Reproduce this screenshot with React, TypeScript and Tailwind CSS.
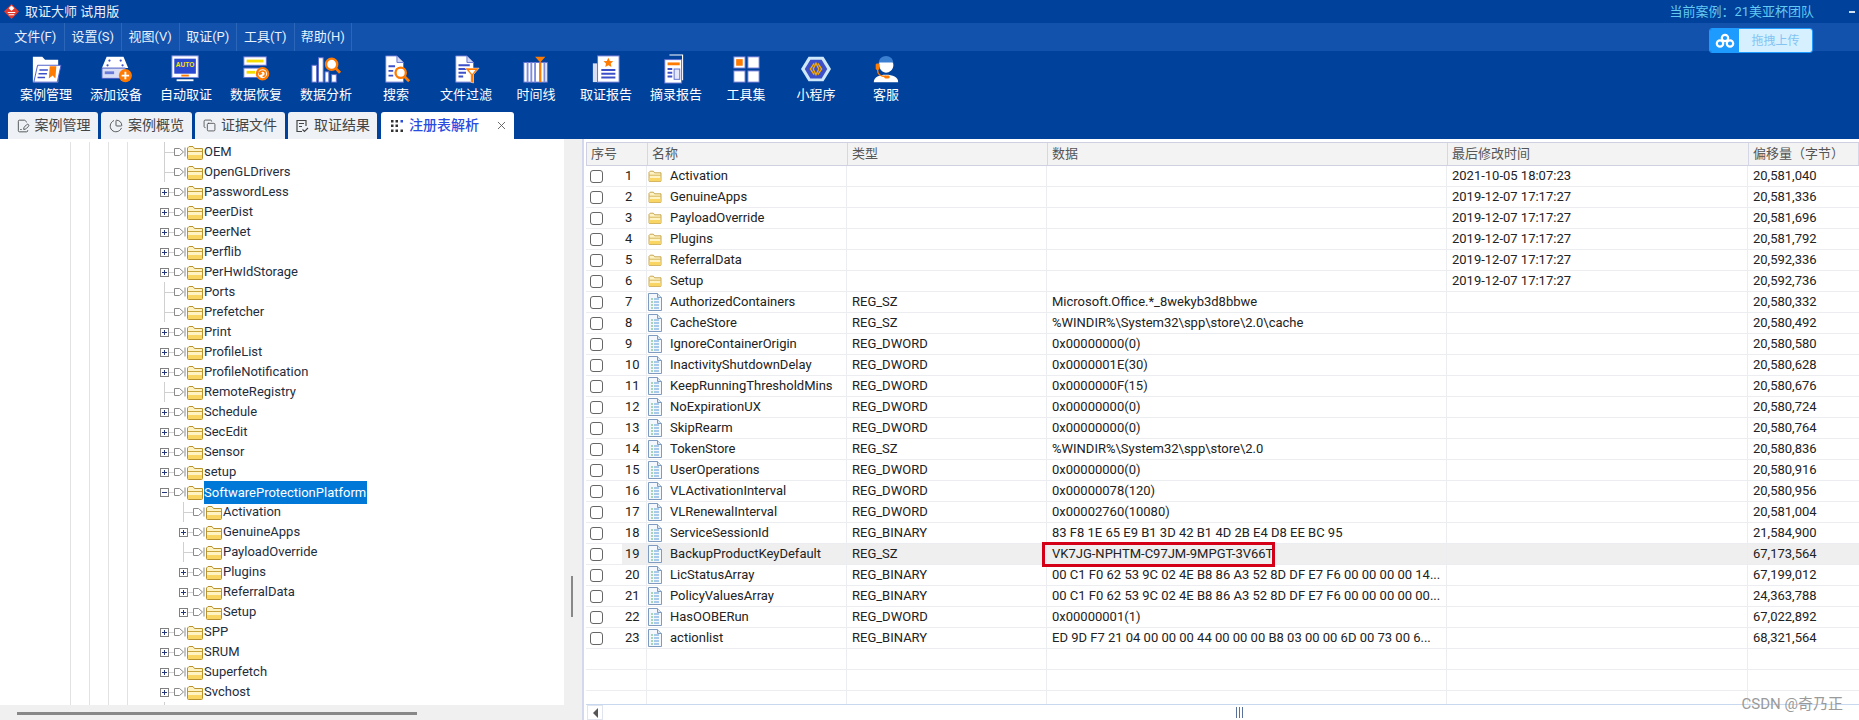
import React from 'react'
import { FilePenLine, ChartPie, Copy, X } from 'lucide-react'

const menus = ['文件(F)', '设置(S)', '视图(V)', '取证(P)', '工具(T)', '帮助(H)']

const Sheet = ({ children }: { children?: React.ReactNode }) => (
  <g>
    <path d="M5 2h12l7 7v21H5z" fill="#fff" stroke="#5f6fd0" />
    <path d="M17 2v7h7" fill="#cfd6f5" stroke="#5f6fd0" />
    {children}
  </g>
)

const toolIcons: Record<string, React.ReactNode> = {
  case: (
    <>
      <path d="M2 3h10l3 3h14v24H2z" fill="#fff" />
      <path d="M7 12h25l-4 18H3z" fill="#fff" stroke="#4a5ac8" strokeWidth="1" />
      <path d="M9 17h9M8 21h9M7 25h8" stroke="#3d50c8" strokeWidth="1.6" />
      <path d="M20 13h7l-1 13-3-3-4 3z" fill="#ff7a00" />
    </>
  ),
  device: (
    <>
      <path d="M6 3h18l5 12H1z" fill="#fff" />
      <path d="M1 15h25v11H1z" fill="#d9def5" stroke="#4a5ac8" />
      <path d="M4 20h10" stroke="#6a7ad8" strokeWidth="3" />
      <circle cx="9" cy="7" r="1.2" fill="#3d50c8" /><circle cx="21" cy="7" r="1.2" fill="#3d50c8" />
      <circle cx="7" cy="12" r="1.2" fill="#3d50c8" /><circle cx="23" cy="12" r="1.2" fill="#3d50c8" />
      <circle cx="26" cy="23" r="7" fill="#ff7a00" />
      <path d="M26 19v8M22 23h8" stroke="#fff" strokeWidth="2" />
    </>
  ),
  auto: (
    <>
      <rect x="1" y="2" width="28" height="23" fill="#fff" stroke="#7f8cdc" />
      <rect x="3.5" y="5" width="23" height="16" fill="#2a49d0" />
      <text x="15" y="14" fontSize="7" fontWeight="700" textAnchor="middle" fill="#ffe100" fontFamily="Liberation Sans, sans-serif">AUTO</text>
      <rect x="11" y="22" width="8" height="2" fill="#ff7a00" />
      <path d="M6 28h18" stroke="#fff" strokeWidth="2" />
    </>
  ),
  recover: (
    <>
      <rect x="3" y="3" width="24" height="9" fill="#fff" stroke="#5f6fd0" />
      <rect x="6" y="6" width="18" height="3" fill="#f5dc00" />
      <rect x="3" y="15" width="20" height="10" fill="#fff" stroke="#5f6fd0" />
      <rect x="6" y="18" width="9" height="3" fill="#f5dc00" />
      <circle cx="23" cy="21" r="6" fill="#fff" stroke="#ff7a00" strokeWidth="2.5" />
      <path d="M20 21a3 3 0 1 1 3 3M19 19l1 2.5 2.5-1" stroke="#ff7a00" strokeWidth="1.6" fill="none" />
    </>
  ),
  analyze: (
    <>
      <rect x="1" y="12" width="5" height="18" fill="#fff" stroke="#5f6fd0" />
      <rect x="8" y="4" width="5" height="26" fill="#fff" stroke="#5f6fd0" />
      <rect x="15" y="19" width="4" height="11" fill="#fff" stroke="#5f6fd0" />
      <rect x="22" y="22" width="5" height="8" fill="#fff" stroke="#5f6fd0" />
      <path d="M26 15l5 5" stroke="#ff7a00" strokeWidth="3" />
      <circle cx="22" cy="11" r="6" fill="#fff" stroke="#ff7a00" strokeWidth="2.5" />
    </>
  ),
  search: (
    <>
      <Sheet>
        <path d="M8 13h7M8 18h5M8 23h5" stroke="#3d50c8" strokeWidth="2" />
      </Sheet>
      <path d="M25 24l5 5" stroke="#ff7a00" strokeWidth="3" />
      <circle cx="21" cy="20" r="5.5" fill="#fff" stroke="#ff7a00" strokeWidth="2.5" />
    </>
  ),
  filter: (
    <>
      <Sheet>
        <path d="M8 12h12M8 16h10M8 20h8M8 24h5" stroke="#3d50c8" strokeWidth="2" />
      </Sheet>
      <path d="M15 15h15l-6 7v9l-3-1v-8z" fill="#ff7a00" stroke="#fff" strokeWidth=".5" />
      <path d="M19 17h7l-3 4h-1z" fill="#fff" />
    </>
  ),
  timeline: (
    <>
      <rect x="3" y="9" width="25" height="21" fill="#fff" stroke="#5f6fd0" />
      <path d="M7 9v21M11 9v21M15 9v21M25 9v21" stroke="#7f8cdc" strokeWidth="2" />
      <path d="M20.5 9v21" stroke="#ff7a00" strokeWidth="2.5" />
      <path d="M15 3h11l-5.5 6z" fill="#ff7a00" />
    </>
  ),
  report: (
    <>
      <rect x="2" y="10" width="6" height="20" fill="#d9def5" />
      <rect x="7" y="2" width="23" height="28" fill="#fff" stroke="#5f6fd0" />
      <path d="M18.5 4l1.6 3.4 3.6.4-2.7 2.4.8 3.6-3.3-1.8-3.3 1.8.8-3.6-2.7-2.4 3.6-.4z" fill="#ff7a00" />
      <path d="M11 17h15M11 21h15M11 25h15" stroke="#3d50c8" strokeWidth="2" />
    </>
  ),
  extract: (
    <>
      <path d="M9 1h14v27" fill="none" stroke="#fff" strokeWidth="1.2" />
      <rect x="4" y="6" width="18" height="25" fill="#fff" stroke="#5f6fd0" />
      <rect x="7" y="9" width="13" height="3" fill="#ff7a00" />
      <path d="M7 16h5M7 20h5M7 24h5" stroke="#3d50c8" strokeWidth="2" />
      <rect x="14" y="16" width="6" height="11" fill="#e4e8fa" stroke="#5f6fd0" />
    </>
  ),
  tools: (
    <>
      <rect x="3" y="3" width="12" height="12" fill="#fff" stroke="#5f6fd0" />
      <rect x="5.5" y="5.5" width="7" height="7" fill="#ff7a00" />
      <rect x="18" y="3" width="12" height="12" fill="#fff" stroke="#5f6fd0" />
      <rect x="3" y="18" width="12" height="12" fill="#fff" stroke="#5f6fd0" />
      <rect x="18" y="18" width="12" height="12" fill="#fff" stroke="#5f6fd0" />
    </>
  ),
  mini: (
    <>
      <path d="M8 3h16l8 13-8 13H8L0 16z" fill="#cfe9fb" />
      <path d="M10 6h12l6 10-6 10H10L4 16z" fill="#3d50c8" />
      <path d="M14 10l-4 6 4 6M18 10l4 6-4 6M16 10l-3 6 3 6 3-6z" fill="none" stroke="#f5a800" strokeWidth="1.5" />
    </>
  ),
  service: (
    <>
      <path d="M3 30c0-6 6-8 13-8s13 2 13 8z" fill="#fff" />
      <path d="M8 10a8 8 0 0 1 16 0l-2 1H9z" fill="#3a7fd0" />
      <path d="M9 9h14c2 2 1 10-7 11-6-1-8-6-7-11z" fill="#fff" />
      <rect x="5" y="10" width="4" height="7" rx="1.5" fill="#ff7a00" />
      <path d="M7 17c0 5 4 7 9 7" stroke="#ff7a00" strokeWidth="1.5" fill="none" />
      <rect x="14" y="23" width="6" height="3" rx="1.5" fill="#ff7a00" />
    </>
  ),
}

const tools = [
  ['案例管理', 'case'], ['添加设备', 'device'], ['自动取证', 'auto'], ['数据恢复', 'recover'],
  ['数据分析', 'analyze'], ['搜索', 'search'], ['文件过滤', 'filter'], ['时间线', 'timeline'],
  ['取证报告', 'report'], ['摘录报告', 'extract'], ['工具集', 'tools'], ['小程序', 'mini'], ['客服', 'service'],
]

const ResultIcon = () => (
  <svg viewBox="0 0 14 14" className="w-[14px] h-[14px]" fill="none" stroke="currentColor" strokeWidth="1.2">
    <path d="M7 12.5H2V1.5h9V7" />
    <path d="M4 4.5h5M4 7.5h3" />
    <path d="M7.5 10.5l2 2 3.5-3.5" />
  </svg>
)

const tabs = [
  { label: '案例管理', w: 'w-[90px] mr-[3px]', icon: <FilePenLine size={14} strokeWidth={1.5} /> },
  { label: '案例概览', w: 'w-[91px] mr-[3px]', icon: <ChartPie size={14} strokeWidth={1.5} /> },
  { label: '证据文件', w: 'w-[90px] mr-[3px]', icon: <Copy size={13} strokeWidth={1.5} /> },
  { label: '取证结果', w: 'w-[89px] mr-[4px]', icon: <ResultIcon /> },
]

const Folder = ({ className = 'w-[16px] h-[15px]' }: { className?: string }) => (
  <svg viewBox="0 0 16 15" className={`shrink-0 ${className}`}>
    <path d="M.5 3V13.5a1 1 0 0 0 1 1h13a1 1 0 0 0 1-1V3.5h-8L6 1.5H2z" fill="#fff3c4" stroke="#b8922f" />
    <path d="M1 6.5h14" stroke="#c9a540" />
    <path d="M1 10h14v4H1z" fill="#f9d663" />
  </svg>
)

const RegFile = () => (
  <svg viewBox="0 0 14 18" className="w-[14px] h-[18px] shrink-0">
    <path d="M.5.5h9l4 4v13H.5z" fill="#f4f8fd" stroke="#7f9cc0" />
    <path d="M9.5.5v4h4" fill="#dbe6f3" stroke="#7f9cc0" />
    <path d="M3 6h2M3 9h2M3 12h2M3 15h2" stroke="#57b36b" />
    <path d="M6 6h5M6 9h5M6 12h5M6 15h5" stroke="#5b9bd8" />
  </svg>
)

const TypeMark = () => (
  <svg viewBox="0 0 12 10" className="w-[12px] h-[10px] shrink-0">
    <path d="M.5 1.5h5l4 3.5-4 3.5h-5z" fill="#fff" stroke="#8a8a8a" />
    <path d="M11 .5v9" stroke="#8a8a8a" />
  </svg>
)

type TreeItem = { name: string; open?: boolean; leaf?: boolean; depth?: number; selected?: boolean }

const treeItems: TreeItem[] = [
  { name: 'OEM', leaf: true }, { name: 'OpenGLDrivers', leaf: true }, { name: 'PasswordLess' }, { name: 'PeerDist' },
  { name: 'PeerNet' }, { name: 'Perflib' }, { name: 'PerHwIdStorage' }, { name: 'Ports', leaf: true },
  { name: 'Prefetcher', leaf: true }, { name: 'Print' }, { name: 'ProfileList' }, { name: 'ProfileNotification' },
  { name: 'RemoteRegistry', leaf: true }, { name: 'Schedule' }, { name: 'SecEdit' }, { name: 'Sensor' }, { name: 'setup' },
  { name: 'SoftwareProtectionPlatform', open: true, selected: true },
  { name: 'Activation', leaf: true, depth: 1 }, { name: 'GenuineApps', depth: 1 }, { name: 'PayloadOverride', leaf: true, depth: 1 },
  { name: 'Plugins', depth: 1 }, { name: 'ReferralData', depth: 1 }, { name: 'Setup', depth: 1 },
  { name: 'SPP' }, { name: 'SRUM' }, { name: 'Superfetch' }, { name: 'Svchost' },
]

const TreeRow = ({ item }: { item: TreeItem }) => (
  <div className="flex h-[20px] pl-[70px] items-stretch shrink-0">
    <div className="w-[19px] border-l border-[#e2e2e2]" />
    <div className="w-[19px] border-l border-[#e2e2e2]" />
    <div className="w-[19px] border-l border-[#e2e2e2]" />
    <div className="w-[19px] border-l border-[#e2e2e2]" />
    <div className="w-[18px]" />
    {item.depth ? <div className="w-[19px]" /> : null}
    <div className={`relative w-[10px] flex items-center ${item.leaf ? 'border-l border-[#d0d0d0]' : ''}`}>
      <div className="w-full border-t border-[#d0d0d0]" />
      {!item.leaf && (
        <div className="absolute left-[-4px] top-[6px] w-[9px] h-[9px] border border-[#808080] bg-white flex items-center justify-center">
          <div className="relative w-[5px] h-px bg-[#26367a]">
            {!item.open && <div className="absolute left-[2px] top-[-2px] w-px h-[5px] bg-[#26367a]" />}
          </div>
        </div>
      )}
    </div>
    <div className="flex items-center">
      <TypeMark />
      <span className="w-[1px]" />
      <Folder />
      <span
        className={`ml-[1px] whitespace-nowrap text-[13px] ${
          item.selected ? 'bg-[#0078d7] text-white w-[163px] h-[23px] leading-[23px]' : 'h-[20px] leading-[20px] text-[#1f2d3d]'
        }`}
      >
        {item.name}
      </span>
    </div>
  </div>
)

const rows: [string, string, string, string, string, boolean][] = [
  ['1', 'Activation', '', '', '2021-10-05 18:07:23', true],
  ['2', 'GenuineApps', '', '', '2019-12-07 17:17:27', true],
  ['3', 'PayloadOverride', '', '', '2019-12-07 17:17:27', true],
  ['4', 'Plugins', '', '', '2019-12-07 17:17:27', true],
  ['5', 'ReferralData', '', '', '2019-12-07 17:17:27', true],
  ['6', 'Setup', '', '', '2019-12-07 17:17:27', true],
  ['7', 'AuthorizedContainers', 'REG_SZ', 'Microsoft.Office.*_8wekyb3d8bbwe', '', false],
  ['8', 'CacheStore', 'REG_SZ', '%WINDIR%\\System32\\spp\\store\\2.0\\cache', '', false],
  ['9', 'IgnoreContainerOrigin', 'REG_DWORD', '0x00000000(0)', '', false],
  ['10', 'InactivityShutdownDelay', 'REG_DWORD', '0x0000001E(30)', '', false],
  ['11', 'KeepRunningThresholdMins', 'REG_DWORD', '0x0000000F(15)', '', false],
  ['12', 'NoExpirationUX', 'REG_DWORD', '0x00000000(0)', '', false],
  ['13', 'SkipRearm', 'REG_DWORD', '0x00000000(0)', '', false],
  ['14', 'TokenStore', 'REG_SZ', '%WINDIR%\\System32\\spp\\store\\2.0', '', false],
  ['15', 'UserOperations', 'REG_DWORD', '0x00000000(0)', '', false],
  ['16', 'VLActivationInterval', 'REG_DWORD', '0x00000078(120)', '', false],
  ['17', 'VLRenewalInterval', 'REG_DWORD', '0x00002760(10080)', '', false],
  ['18', 'ServiceSessionId', 'REG_BINARY', '83 F8 1E 65 E9 B1 3D 42 B1 4D 2B E4 D8 EE BC 95', '', false],
  ['19', 'BackupProductKeyDefault', 'REG_SZ', 'VK7JG-NPHTM-C97JM-9MPGT-3V66T', '', false],
  ['20', 'LicStatusArray', 'REG_BINARY', '00 C1 F0 62 53 9C 02 4E B8 86 A3 52 8D DF E7 F6 00 00 00 00 14...', '', false],
  ['21', 'PolicyValuesArray', 'REG_BINARY', '00 C1 F0 62 53 9C 02 4E B8 86 A3 52 8D DF E7 F6 00 00 00 00 00...', '', false],
  ['22', 'HasOOBERun', 'REG_DWORD', '0x00000001(1)', '', false],
  ['23', 'actionlist', 'REG_BINARY', 'ED 9D F7 21 04 00 00 00 44 00 00 00 B8 03 00 00 6D 00 73 00 6...', '', false],
]

const offsets = ['20,581,040', '20,581,336', '20,581,696', '20,581,792', '20,592,336', '20,592,736', '20,580,332', '20,580,492', '20,580,580', '20,580,628', '20,580,676', '20,580,724', '20,580,764', '20,580,836', '20,580,916', '20,580,956', '20,581,004', '21,584,900', '67,173,564', '67,199,012', '24,363,788', '67,022,892', '68,321,564']

const gridCols = 'grid grid-cols-[61px_200px_200px_400px_301px_1fr]'
const headers = ['序号', '名称', '类型', '数据', '最后修改时间', '偏移量（字节）']

const App = () => {
  return (
    <div
      className="w-[1859px] h-[720px] overflow-hidden flex flex-col bg-[#00419b]"
      style={{ fontFamily: 'Roboto, "Noto Sans CJK SC", sans-serif' }}
    >
      {/* title bar */}
      <div className="h-[23px] flex items-center text-[13px] text-[#e8f0fb] shrink-0">
        <svg viewBox="0 0 16 16" className="w-[15px] h-[15px] ml-[4px] mr-[6px]">
          <path d="M8 0l8 8-8 8-8-8z" fill="#e23a2e" />
          <path d="M8 1.5L11 4.5 8 7.5 5 4.5z" fill="#fff" />
          <path d="M4 9h8M5 11.5h6" stroke="#fff" strokeWidth="1.2" />
        </svg>
        <span>取证大师 试用版</span>
        <span className="ml-auto mr-[35px] text-[#63c9f2]">当前案例：21美亚杯团队</span>
        <div className="w-[6px] h-[2px] bg-[#cfe0f5] mr-[4px]" />
      </div>

      {/* menu */}
      <div className="h-[28px] bg-[#1252ad] flex items-start text-[13px] text-[#e8f0fb] shrink-0">
        <div className="h-[28px] flex pl-[7px]">
          {menus.map(m => (
            <div key={m} className="h-[28px] w-[57.5px] flex items-center justify-center border-r border-[#2c66b8] whitespace-nowrap">
              {m}
            </div>
          ))}
        </div>
        <div className="ml-auto mr-[46px] mt-[5px] w-[104px] h-[25px] flex rounded-[3px] overflow-hidden border border-[#1e9bff]">
          <div className="w-[29px] bg-[#1e9bff] flex items-center justify-center">
            <svg viewBox="0 0 20 16" className="w-[20px] h-[16px]" fill="none" stroke="#fff" strokeWidth="2.2">
              <circle cx="10" cy="5" r="3.2" />
              <circle cx="5" cy="10.5" r="3.2" />
              <circle cx="15" cy="10.5" r="3.2" />
            </svg>
          </div>
          <div className="flex-1 bg-[#d6f0ff] text-[#83c4f2] flex items-center justify-center text-[12px]">拖拽上传</div>
        </div>
      </div>

      {/* toolbar */}
      <div className="h-[61px] flex pl-[11px] shrink-0">
        {tools.map(([label, key]) => (
          <div key={label} className="w-[70px] flex flex-col items-center text-[13px] text-white">
            <svg viewBox="0 0 32 32" className="w-[32px] h-[30px] mt-[3px]">{toolIcons[key]}</svg>
            <span className="leading-[20px] mt-[1px] whitespace-nowrap">{label}</span>
          </div>
        ))}
      </div>

      {/* tabs */}
      <div className="h-[27px] flex pl-[8px] items-end shrink-0">
        {tabs.map(t => (
          <div key={t.label} className={`${t.w} h-[27px] rounded-t-[3px] bg-[#eef2f7] flex items-center justify-center gap-[5px] text-[14px] text-[#444]`}>
            {t.icon}
            <span className="whitespace-nowrap">{t.label}</span>
          </div>
        ))}
        <div className="w-[133px] h-[27px] rounded-t-[3px] bg-white flex items-center pl-[10px] text-[14px] font-medium text-[#2a4de0]">
          <svg viewBox="0 0 12 12" className="w-[12px] h-[12px] mr-[6px]" fill="#333">
            <rect x="0" y="0" width="2.5" height="2.5" /><rect x="4.5" y="0" width="2.5" height="2.5" /><rect x="9.5" y="0" width="2.5" height="2.5" fill="#2a4de0" />
            <rect x="0" y="4.5" width="2.5" height="2.5" /><rect x="4.5" y="4.5" width="2.5" height="2.5" />
            <rect x="0" y="9.5" width="2.5" height="2.5" /><rect x="4.5" y="9.5" width="2.5" height="2.5" /><rect x="9.5" y="9.5" width="2.5" height="2.5" />
          </svg>
          <span className="whitespace-nowrap">注册表解析</span>
          <X size={13} strokeWidth={1.6} className="ml-[16px] text-[#555]" />
        </div>
      </div>

      {/* body */}
      <div className="h-[581px] flex bg-[#f0f0f0] shrink-0">
        <div className="w-[582px] flex flex-col shrink-0">
          <div className="h-[566px] flex">
            <div className="w-[564px] bg-white pt-[3px] overflow-hidden flex flex-col">
              {treeItems.map(item => <TreeRow key={`${item.name}-${item.depth ?? 0}`} item={item} />)}
              <TreeRow item={{ name: '', leaf: true }} />
            </div>
            <div className="flex-1 pl-[7px] pt-[437px]">
              <div className="w-[2px] h-[41px] bg-[#888]" />
            </div>
          </div>
          <div className="pl-[17px] pt-[7px]">
            <div className="w-[400px] h-[3px] bg-[#888]" />
          </div>
        </div>

        <div className="flex-1 bg-white border-l-2 border-[#d3d8ee] pl-[2px] flex flex-col relative">
          <div className="h-[3px] shrink-0" />
          <div className={`${gridCols} h-[24px] shrink-0 bg-[#f3f3f3] border-y border-[#cfd0e2] border-l text-[13px] text-[#555]`}>
            {headers.map(h => (
              <div key={h} className="border-r border-[#d6d7e6] pl-[4px] flex items-center whitespace-nowrap">{h}</div>
            ))}
          </div>
          <div className="h-[539px] shrink-0 overflow-hidden border-b border-[#c8d8ee] text-[13px] text-[#222]">
            {rows.map((r, i) => {
              const hl = r[0] === '19'
              const rowBg = hl ? 'bg-[#efefef]' : ''
              return (
                <div key={r[0]} className={`${gridCols} h-[21px] border-b border-[#ebedf0]`}>
                  <div className="flex border-r border-[#ebedf0]">
                    <div className="w-[36px] pl-[4px] flex items-center shrink-0">
                      <div className="w-[13px] h-[13px] border border-[#666] rounded-[3px] bg-white" />
                    </div>
                    <div className={`flex-1 pl-[3px] flex items-center ${rowBg}`}>{r[0]}</div>
                  </div>
                  <div className={`flex items-center gap-[8px] pl-[1px] border-r border-[#ebedf0] whitespace-nowrap ${rowBg}`}>
                    {r[5] ? <Folder className="w-[14px] h-[12px]" /> : <RegFile />}
                    <span>{r[1]}</span>
                  </div>
                  <div className={`flex items-center pl-[5px] border-r border-[#ebedf0] ${rowBg}`}>{r[2]}</div>
                  <div className={`relative flex items-center pl-[5px] border-r border-[#ebedf0] whitespace-nowrap overflow-visible ${rowBg}`}>
                    <span>{r[3]}</span>
                    {hl && <div className="absolute left-[-5px] top-[-2px] w-[233px] h-[25px] border-[3px] border-[#d40018]" />}
                  </div>
                  <div className={`flex items-center pl-[5px] border-r border-[#ebedf0] ${rowBg}`}>{r[4]}</div>
                  <div className={`flex items-center pl-[5px] ${rowBg}`}>{offsets[i]}</div>
                </div>
              )
            })}
            {[0, 1, 2].map(n => (
              <div key={n} className={`${gridCols} h-[21px] border-b border-[#ebedf0]`}>
                {headers.map((h, c) => <div key={h} className={c < 5 ? 'border-r border-[#ebedf0]' : ''} />)}
              </div>
            ))}
          </div>
          <div className="h-[15px] flex items-center shrink-0">
            <div className="ml-[1px] w-[16px] h-[15px] border border-[#e0e4ee] flex items-center justify-center">
              <div className="w-0 h-0 border-y-[5px] border-y-transparent border-r-[5px] border-r-[#555]" />
            </div>
            <div className="ml-[633px] flex gap-[2px]">
              <div className="w-px h-[11px] bg-[#5a6f9a]" />
              <div className="w-px h-[11px] bg-[#5a6f9a]" />
              <div className="w-px h-[11px] bg-[#5a6f9a]" />
            </div>
          </div>
          <span className="absolute right-[16px] bottom-[5px] text-[15px] text-[#9a9a9a] whitespace-nowrap">CSDN @奇乃正</span>
        </div>
      </div>
    </div>
  )
}

export default App
